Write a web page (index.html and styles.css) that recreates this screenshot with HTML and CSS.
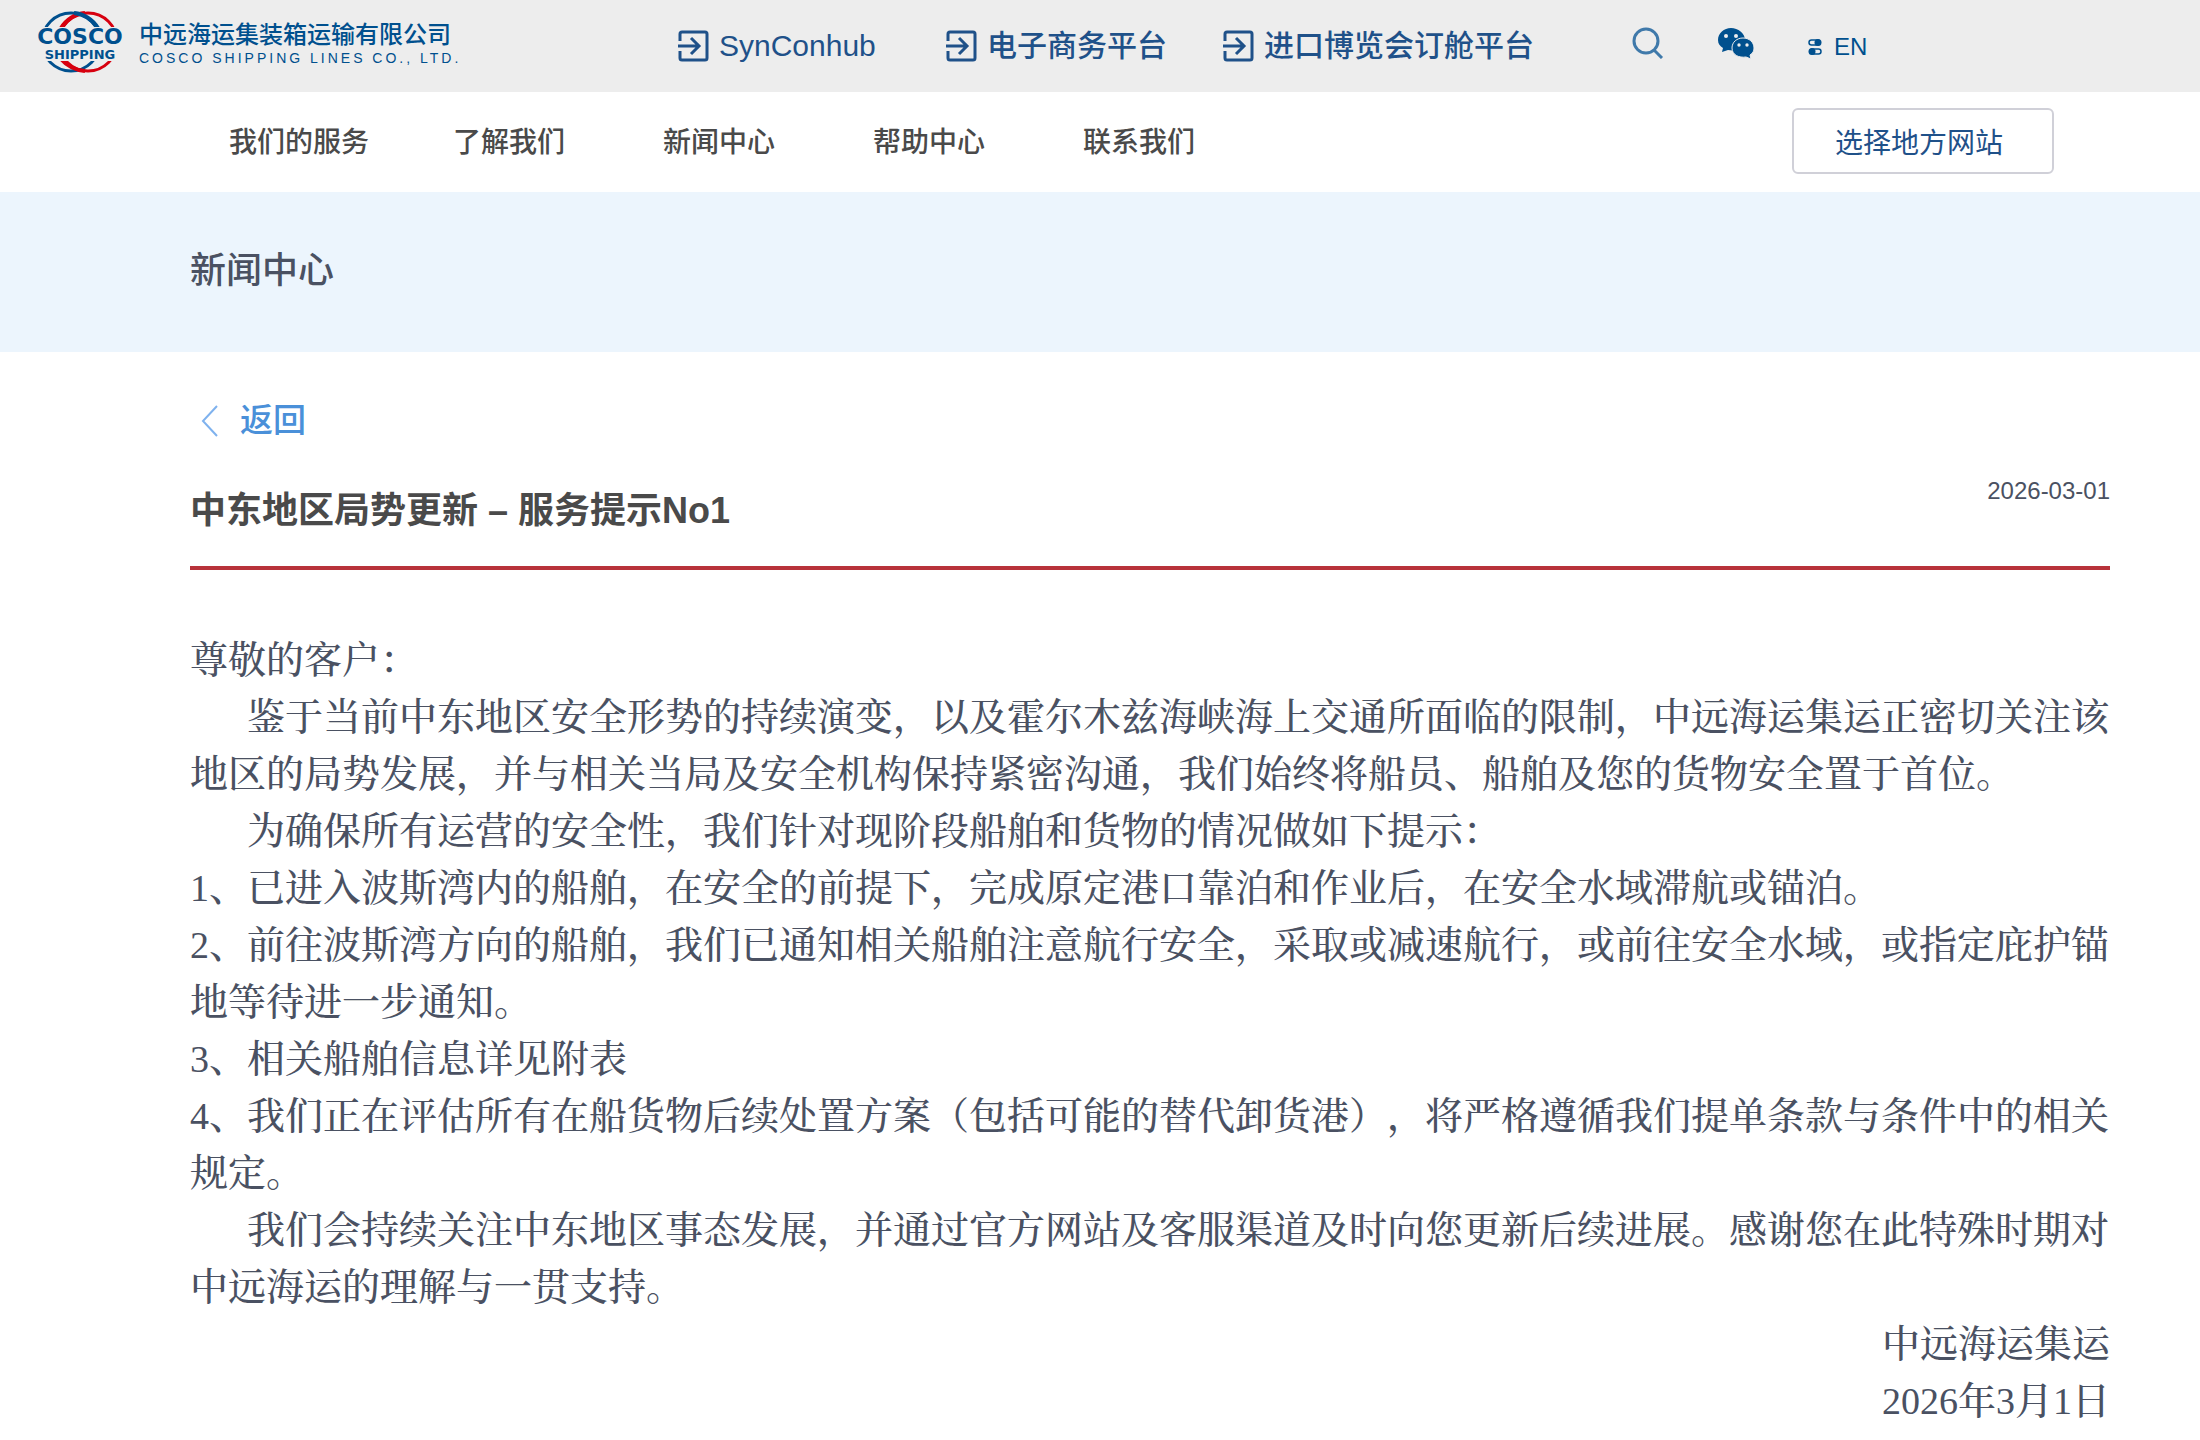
FILE: index.html
```html
<!DOCTYPE html>
<html lang="zh-CN">
<head>
    <meta charset="UTF-8">
    <meta name="viewport" content="width=device-width, initial-scale=1.0">
    <title>中东地区局势更新 – 服务提示No1</title>
    <link rel="stylesheet" href="styles.css">
</head>
<body>

    <header class="topbar">
        <a href="#" class="logo">
            <svg class="logo-mark" width="98" height="64" viewBox="0 0 98 64" aria-hidden="true">
                <clipPath id="caps">
                    <rect x="0" y="0" width="98" height="17"/>
                    <rect x="0" y="51" width="98" height="13"/>
                </clipPath>
                <g clip-path="url(#caps)" fill="none" stroke-width="3">
                    <circle cx="57" cy="32" r="29" stroke="#d7000f"/>
                    <circle cx="40" cy="32" r="29" stroke="#00508e"/>
                    <path d="M30 18C36 9 44 4 54 3" stroke="#d7000f" stroke-width="4"/>
                    <path d="M30 49C36 56 44 60 54 61" stroke="#d7000f" stroke-width="4"/>
                    <path d="M43 3C53 4 61 9 67 18" stroke="#00508e" stroke-width="4"/>
                </g>
                <text x="49" y="34" class="mark-big">COSCO</text>
                <text x="49" y="49" class="mark-small">SHIPPING</text>
            </svg>
            <span class="logo-text">
                <span class="logo-cn">中远海运集装箱运输有限公司</span>
                <span class="logo-en">COSCO SHIPPING LINES CO., LTD.</span>
            </span>
        </a>

        <div class="platforms">
            <a href="#" class="platform">
                <svg width="31" height="32" viewBox="0 0 31 32"><path d="M2 11V4q0-2 2-2h23q2 0 2 2v24q0 2-2 2H4q-2 0-2-2v-7M0 16h20M13 8l8 8-8 8"/></svg>
                SynConhub
            </a>
            <a href="#" class="platform">
                <svg width="31" height="32" viewBox="0 0 31 32"><path d="M2 11V4q0-2 2-2h23q2 0 2 2v24q0 2-2 2H4q-2 0-2-2v-7M0 16h20M13 8l8 8-8 8"/></svg>
                电子商务平台
            </a>
            <a href="#" class="platform">
                <svg width="31" height="32" viewBox="0 0 31 32"><path d="M2 11V4q0-2 2-2h23q2 0 2 2v24q0 2-2 2H4q-2 0-2-2v-7M0 16h20M13 8l8 8-8 8"/></svg>
                进口博览会订舱平台
            </a>
        </div>

        <div class="tools">
            <button type="button" class="icon-btn" aria-label="搜索">
                <svg width="32" height="32" viewBox="0 0 32 32" fill="none" stroke="#3f79aa" stroke-width="3"><circle cx="14" cy="14" r="12"/><path d="M22 23l8 8"/></svg>
            </button>
            <button type="button" class="icon-btn" aria-label="微信">
                <svg width="36" height="32" viewBox="0 0 36 32">
                    <path fill="#00508e" d="M13 1C6 1 0 6 0 13c0 4 2 6 5 8l-1 4 6-2c10 2 17-3 17-10C27 6 20 1 13 1z"/>
                    <path fill="#00508e" stroke="#ededed" stroke-width="1" d="M25 11c-6 0-11 4-11 10 0 7 7 10 14 9l5 2-1-4c3-2 4-4 4-7 0-6-5-10-11-10z"/>
                    <g fill="#ededed"><circle cx="8" cy="9" r="2"/><circle cx="18" cy="9" r="2"/><circle cx="21" cy="18" r="1.7"/><circle cx="29" cy="18" r="1.7"/></g>
                </svg>
            </button>
            <a href="#" class="lang">
                <svg width="14" height="18" viewBox="0 0 14 18">
                    <rect x="1" y="2" width="11" height="5" rx="2.5" fill="none" stroke="#00508e" stroke-width="1.5"/>
                    <circle cx="10" cy="4.5" r="3.5" fill="#00508e"/>
                    <rect x="2" y="11" width="11" height="5" rx="2.5" fill="none" stroke="#00508e" stroke-width="1.5"/>
                    <circle cx="4" cy="13.5" r="3.5" fill="#00508e"/>
                </svg>
                EN
            </a>
        </div>
    </header>

    <nav class="menu">
        <a href="#" class="menu-item">我们的服务</a>
        <a href="#" class="menu-item">了解我们</a>
        <a href="#" class="menu-item">新闻中心</a>
        <a href="#" class="menu-item">帮助中心</a>
        <a href="#" class="menu-item">联系我们</a>
        <button type="button" class="site-btn">选择地方网站</button>
    </nav>

    <div class="banner">新闻中心</div>

    <main class="content">
        <a href="#" class="back">
            <svg width="18" height="32" viewBox="0 0 18 32" fill="none" stroke="#7fb2ee" stroke-width="2"><path d="M16 1L2 16l14 15"/></svg>
            返回
        </a>

        <div class="title-row">
            <h1 class="title">中东地区局势更新 – 服务提示No1</h1>
            <time class="date" datetime="2026-03-01">2026-03-01</time>
        </div>

        <article class="article">
            <p>尊敬的客户：</p>
            <p class="indent">鉴于当前中东地区安全形势的持续演变，以及霍尔木兹海峡海上交通所面临的限制，中远海运集运正密切关注该地区的局势发展，并与相关当局及安全机构保持紧密沟通，我们始终将船员、船舶及您的货物安全置于首位。</p>
            <p class="indent">为确保所有运营的安全性，我们针对现阶段船舶和货物的情况做如下提示：</p>
            <p>1、已进入波斯湾内的船舶，在安全的前提下，完成原定港口靠泊和作业后，在安全水域滞航或锚泊。</p>
            <p>2、前往波斯湾方向的船舶，我们已通知相关船舶注意航行安全，采取或减速航行，或前往安全水域，或指定庇护锚地等待进一步通知。</p>
            <p>3、相关船舶信息详见附表</p>
            <p>4、我们正在评估所有在船货物后续处置方案（包括可能的替代卸货港），将严格遵循我们提单条款与条件中的相关规定。</p>
            <p class="indent">我们会持续关注中东地区事态发展，并通过官方网站及客服渠道及时向您更新后续进展。感谢您在此特殊时期对中远海运的理解与一贯支持。</p>
            <p class="sign">中远海运集运</p>
            <p class="sign">2026年3月1日</p>
        </article>
    </main>

</body>
</html>
```
FILE: styles.css
```css
* {
    box-sizing: border-box;
}
body {
    margin: 0;
    background: white;
    color: #4a5162;
    font-family: "Liberation Sans", "Noto Sans CJK SC", sans-serif;
}
a {
    color: inherit;
    text-decoration: none;
}
button {
    font-family: inherit;
    cursor: pointer;
}

/* top bar */
.topbar {
    display: flex;
    align-items: center;
    height: 92px;
    padding-left: 31px;
    background: #ededed;
    color: #1f5189;
    white-space: nowrap;
}
.logo {
    display: flex;
    align-items: center;
    gap: 10px;
    width: 647px;
    padding-bottom: 8px;
    color: #00508e;
}
.mark-big,
.mark-small {
    font-family: "DejaVu Sans", sans-serif;
    font-weight: bold;
    text-anchor: middle;
    fill: #00508e;
}
.mark-big {
    font-size: 22px;
}
.mark-small {
    font-size: 13px;
}
.logo-text {
    display: flex;
    flex-direction: column;
    padding-top: 4px;
}
.logo-cn {
    font-size: 24px;
    line-height: 28px;
    font-weight: 500;
}
.logo-en {
    font-size: 14px;
    line-height: 18px;
    letter-spacing: 3px;
}
.platforms {
    display: flex;
    gap: 56px;
}
.platform {
    display: flex;
    align-items: center;
    gap: 10px;
    min-width: 212px;
    font-size: 30px;
    line-height: 40px;
    font-weight: 500;
}
.platform svg {
    fill: none;
    stroke: #1f5189;
    stroke-width: 3;
}
.tools {
    display: flex;
    align-items: center;
    gap: 54px;
    padding-left: 98px;
}
.icon-btn {
    padding: 0 0 6px;
    border: 0;
    background: none;
    line-height: 0;
}
.lang {
    display: flex;
    align-items: center;
    gap: 12px;
    padding-top: 2px;
    color: #00508e;
    font-size: 24px;
    font-weight: 500;
}

/* main menu */
.menu {
    display: flex;
    align-items: center;
    height: 100px;
    padding: 0 146px 2px 194px;
}
.menu-item {
    width: 210px;
    padding-top: 4px;
    text-align: center;
    color: #4a4a4a;
    font-size: 28px;
    line-height: 40px;
    font-weight: 500;
}
.site-btn {
    width: 262px;
    height: 66px;
    margin-left: auto;
    padding: 0 8px 0 0;
    border: 2px solid #d0d0d8;
    border-radius: 6px;
    background: white;
    color: #1f5189;
    font-size: 28px;
}

.banner {
    padding: 51px 190px 53px;
    background: #ecf5fd;
    font-size: 36px;
    line-height: 56px;
    font-weight: 500;
}

/* news detail */
.content {
    padding: 45px 90px 0 190px;
}
.back {
    display: flex;
    align-items: center;
    gap: 21px;
    padding-left: 11px;
    color: #4a90d9;
    font-size: 33px;
    line-height: 48px;
    font-weight: 500;
}
.title-row {
    display: flex;
    justify-content: space-between;
    align-items: flex-start;
    height: 125px;
    padding-top: 32px;
    border-bottom: 4px solid #b8323a;
}
.title {
    margin: 0;
    padding-top: 9px;
    color: #4a4a4a;
    font-size: 36px;
    line-height: 50px;
    font-weight: bold;
}
.date {
    font-size: 24px;
    line-height: 28px;
    font-weight: 500;
}
.article {
    padding-top: 62px;
    font-family: "Liberation Serif", "Noto Serif CJK SC", "Noto Sans CJK SC", serif;
    font-size: 38px;
    line-height: 57px;
    font-weight: 500;
    text-spacing-trim: space-all;
}
.article p {
    margin: 0;
}
.article .indent {
    text-indent: 57px;
}
.article .sign {
    text-align: right;
}
```
